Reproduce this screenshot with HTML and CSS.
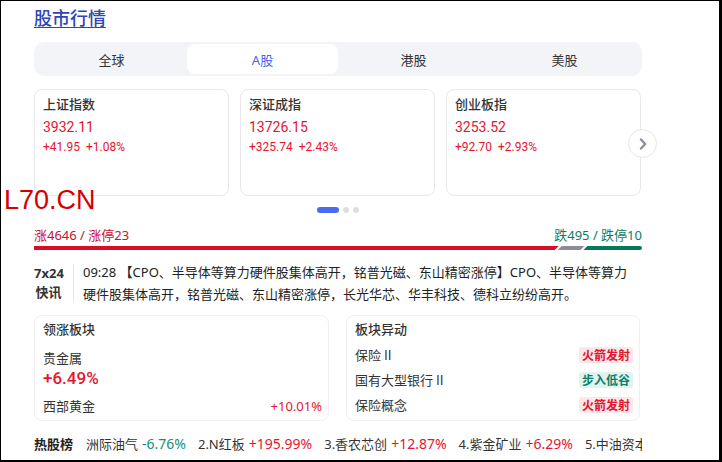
FILE: index.html
```html
<!DOCTYPE html>
<html lang="zh-CN">
<head>
<meta charset="utf-8">
<title>股市行情</title>
<link rel="stylesheet" href="styles.css">
</head>
<body>
<div class="frame">
  <div class="watermark">L70.CN</div>
  <div class="page">
    <h1 class="title"><a href="#">股市行情</a></h1>

    <div class="tabs">
      <div class="tab">全球</div>
      <div class="tab active">A股</div>
      <div class="tab">港股</div>
      <div class="tab">美股</div>
    </div>

    <div class="carousel">
      <div class="cards">
        <div class="card">
          <div class="card-title">上证指数</div>
          <div class="card-value">3932.11</div>
          <div class="card-change"><span>+41.95</span><span>+1.08%</span></div>
        </div>
        <div class="card">
          <div class="card-title">深证成指</div>
          <div class="card-value">13726.15</div>
          <div class="card-change"><span>+325.74</span><span>+2.43%</span></div>
        </div>
        <div class="card">
          <div class="card-title">创业板指</div>
          <div class="card-value">3253.52</div>
          <div class="card-change"><span>+92.70</span><span>+2.93%</span></div>
        </div>
      </div>
      <div class="next">
        <svg width="10" height="12" viewBox="0 0 10 12"><path d="M3 1.5 L7.2 6 L3 10.5" fill="none" stroke="#8b909c" stroke-width="2.4" stroke-linecap="round" stroke-linejoin="round"/></svg>
      </div>
    </div>

    <div class="dots">
      <span class="dot pill"></span>
      <span class="dot"></span>
      <span class="dot"></span>
    </div>

    <div class="stats">
      <span class="up">涨4646 / 涨停23</span>
      <span class="down">跌495 / 跌停10</span>
    </div>
    <div class="bar">
      <div class="seg seg-up" style="width:86.3%"></div>
      <div class="seg seg-flat" style="width:4.4%"></div>
      <div class="seg seg-down"></div>
    </div>

    <div class="news">
      <div class="news-label">7x24<br>快讯</div>
      <div class="news-text">09:28 【CPO、半导体等算力硬件股集体高开，铭普光磁、东山精密涨停】CPO、半导体等算力硬件股集体高开，铭普光磁、东山精密涨停，长光华芯、华丰科技、德科立纷纷高开。</div>
    </div>

    <div class="panels">
      <div class="panel">
        <div class="panel-title">领涨板块</div>
        <div class="lead-name">贵金属</div>
        <div class="lead-pct">+6.49%</div>
        <div class="lead-row">
          <span>西部黄金</span>
          <span class="red">+10.01%</span>
        </div>
      </div>
      <div class="panel">
        <div class="panel-title">板块异动</div>
        <div class="move-row"><span>保险 II</span><span class="badge badge-red">火箭发射</span></div>
        <div class="move-row"><span>国有大型银行 II</span><span class="badge badge-green">步入低谷</span></div>
        <div class="move-row"><span>保险概念</span><span class="badge badge-red">火箭发射</span></div>
      </div>
    </div>

    <div class="hot">
      <span class="hot-title">热股榜</span>
      <span class="hot-item">洲际油气<em class="green">-6.76%</em></span>
      <span class="hot-item">2.N红板<em class="red">+195.99%</em></span>
      <span class="hot-item">3.香农芯创<em class="red">+12.87%</em></span>
      <span class="hot-item">4.紫金矿业<em class="red">+6.29%</em></span>
      <span class="hot-item">5.中油资本</span>
    </div>
  </div>
</div>
</body>
</html>
```
FILE: styles.css
```css
* { box-sizing: border-box; }
html, body { margin: 0; padding: 0; background: #fff; }
body {
  font-family: "Noto Sans", "Noto Sans CJK SC", sans-serif;
  color: #333;
}
.frame {
  position: relative;
  width: 722px;
  height: 462px;
  border-style: solid;
  border-color: #000;
  border-width: 1px 3px 2px 1px;
  overflow: hidden;
}
.watermark {
  position: absolute;
  left: 3px;
  top: 186px;
  font-family: "Liberation Sans", Arial, sans-serif;
  font-size: 27px;
  line-height: 27px;
  color: #d40000;
  z-index: 5;
}
.page {
  padding-left: 33px;
  width: 641px;
}
.title {
  margin: 5px 0 0;
  font-size: 18px;
  line-height: 24px;
  font-weight: 500;
}
.title a {
  color: #3045b8;
  text-decoration: underline;
  text-underline-offset: 2px;
}
.tabs {
  margin-top: 12px;
  height: 34px;
  background: #f3f4f8;
  border-radius: 10px;
  padding: 2px;
  display: flex;
}
.tab {
  flex: 1;
  display: flex;
  align-items: center;
  justify-content: center;
  font-size: 13px;
  color: #333;
  border-radius: 8px;
}
.tab.active {
  background: #fff;
  color: #4e63ee;
}
.carousel {
  position: relative;
  margin-top: 13px;
}
.cards {
  display: flex;
  gap: 11px;
}
.card {
  width: 195px;
  height: 107px;
  border: 1px solid #e8e8ea;
  border-radius: 8px;
  padding: 4px 8px;
}
.card-title {
  font-size: 13px;
  line-height: 20px;
  font-weight: 500;
  color: #333;
}
.card-value {
  margin-top: 3px;
  font-family: Roboto, "Noto Sans", sans-serif;
  font-size: 14px;
  line-height: 20px;
  color: #e5152f;
}
.card-change {
  margin-top: 1px;
  font-family: Roboto, "Noto Sans", sans-serif;
  font-size: 12px;
  line-height: 18px;
  color: #e5152f;
  display: flex;
  gap: 6px;
}
.next {
  position: absolute;
  left: 594px;
  top: 40px;
  width: 29px;
  height: 29px;
  border: 1px solid #e6e6e8;
  border-radius: 50%;
  background: #fff;
  display: flex;
  align-items: center;
  justify-content: center;
}
.dots {
  margin-top: 11px;
  height: 6px;
  display: flex;
  justify-content: center;
  gap: 4px;
}
.dot {
  width: 6px;
  height: 6px;
  border-radius: 3px;
  background: #dcdde0;
}
.dot.pill {
  width: 22px;
  background: #4a6cf0;
}
.stats {
  margin-top: 13px;
  display: flex;
  justify-content: space-between;
  font-size: 13px;
  line-height: 18px;
}
.stats .up { color: #c8102e; }
.stats .down { color: #0a7d62; }
.bar {
  margin-top: 2px;
  height: 4px;
  display: flex;
  gap: 1px;
}
.seg { height: 4px; }
.seg-up {
  background: #d70f27;
  clip-path: polygon(0 0, 100% 0, calc(100% - 4px) 100%, 0 100%);
}
.seg-flat {
  background: #8c8c95;
  margin-left: -2px;
  clip-path: polygon(4px 0, 100% 0, calc(100% - 4px) 100%, 0 100%);
}
.seg-down {
  flex: 1;
  background: #087a5c;
  margin-left: -2px;
  border-radius: 0 2px 2px 0;
  clip-path: polygon(4px 0, 100% 0, 100% 100%, 0 100%);
}
.news {
  margin-top: 11px;
  display: flex;
  align-items: flex-start;
}
.news-label {
  margin-top: 3px;
  width: 40px;
  padding-right: 10px;
  border-right: 1px solid #e6e6e6;
  text-align: center;
  font-size: 13px;
  line-height: 19px;
  font-weight: 700;
  color: #333;
}
.news-text {
  margin-left: 9px;
  width: 552px;
  font-size: 13px;
  line-height: 22px;
  color: #222;
}
.panels {
  margin-top: 10px;
  display: flex;
  gap: 17px;
}
.panel {
  width: 295px;
  height: 106px;
  border: 1px solid #efeff1;
  border-radius: 8px;
  padding: 5px 6px 5px 8px;
}
.panel + .panel { width: 294px; }
.panel-title {
  font-size: 13px;
  line-height: 16px;
  font-weight: 500;
  color: #333;
}
.lead-name {
  margin-top: 12px;
  font-size: 13px;
  line-height: 18px;
  color: #333;
}
.lead-pct {
  font-family: Roboto, "Noto Sans", sans-serif;
  font-size: 17px;
  line-height: 22px;
  font-weight: 500;
  color: #e5152f;
}
.lead-row {
  margin-top: 8px;
  display: flex;
  justify-content: space-between;
  font-size: 13px;
  line-height: 18px;
}
.red { color: #e5152f; }
.green { color: #12907a; }
.move-row {
  height: 25px;
  display: flex;
  align-items: center;
  justify-content: space-between;
  font-family: "Noto Sans CJK SC", sans-serif;
  font-size: 13px;
  color: #333;
}
.panel-title + .move-row { margin-top: 5px; }
.badge {
  height: 16px;
  line-height: 16px;
  padding: 0 3px;
  border-radius: 3px;
  font-size: 12px;
  font-weight: 700;
}
.badge-red { background: #fde6e9; color: #e1152f; }
.badge-green { background: #e0f3ee; color: #0a8068; }
.hot {
  margin-top: 13px;
  width: 608px;
  height: 20px;
  line-height: 20px;
  display: flex;
  align-items: baseline;
  gap: 12px;
  white-space: nowrap;
  overflow: hidden;
  font-size: 13px;
  color: #333;
}
.hot-title {
  font-weight: 700;
  color: #222;
  margin-right: 1px;
}
.hot-item { flex: none; }
.hot-item em {
  font-style: normal;
  font-size: 14px;
  margin-left: 4px;
}
```
